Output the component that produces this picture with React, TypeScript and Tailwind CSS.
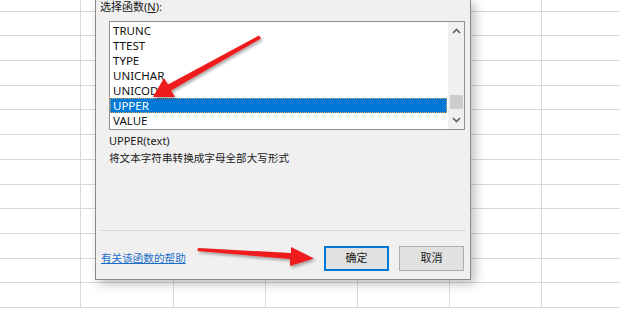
import React from 'react';

/**
 * Excel「插入函数」对话框的局部截图：
 * 背景是表格网格，前面是对话框，再加两支红色标注箭头。
 */

const FUNCS = ['TRUNC', 'TTEST', 'TYPE', 'UNICHAR', 'UNICODE', 'UPPER', 'VALUE'];
const SELECTED = 'UPPER';

const ui = { fontFamily: '"Noto Sans", "Noto Sans CJK SC", sans-serif' };

function SheetGrid() {
  // 第一行只露出下半截
  const rows = Array.from({ length: 13 });
  const cols = [81, 93, 92, 92, 92, 92, 92];
  return (
    <div className="-mt-[13px]">
      {rows.map((_, r) => (
        <div key={r} className="flex h-[24.7px]">
          {cols.map((w, c) => (
            <div
              key={c}
              className="shrink-0 border-r border-b border-[#d9d9d9]"
              style={{ width: w }}
            />
          ))}
        </div>
      ))}
    </div>
  );
}

function Chevron({ up }: { up?: boolean }) {
  return (
    <svg width="9" height="6" viewBox="0 0 9 6">
      <path
        d={up ? 'M1 5 L4.5 1.5 L8 5' : 'M1 1 L4.5 4.5 L8 1'}
        fill="none"
        stroke="#606060"
        strokeWidth="1.6"
      />
    </svg>
  );
}

function FunctionList() {
  return (
    <div className="flex h-[109px] w-[356px] border border-[#8e9296] bg-white">
      <div className="flex-1 pt-[1px]">
        {FUNCS.map((f) => (
          <div
            key={f}
            className={
              f === SELECTED
                ? 'mr-[1px] flex h-[15px] items-center border border-dotted border-[#d9a36a] bg-[#0078d7] pl-[2px] text-white'
                : 'flex h-[15px] items-center pl-[3px] text-[#111]'
            }
          >
            {f}
          </div>
        ))}
      </div>
      <div className="flex w-[16px] flex-col items-center bg-[#f0f0f0]">
        <div className="flex h-[18px] items-center">
          <Chevron up />
        </div>
        <div className="flex-1" />
        <div className="mb-[2px] h-[14px] w-[13px] bg-[#cdcdcd]" />
        <div className="flex h-[18px] items-center">
          <Chevron />
        </div>
      </div>
    </div>
  );
}

function Dialog() {
  return (
    <div
      className="absolute left-[95px] top-[-1px] flex h-[281px] w-[376px] flex-col border border-[#8a8a8a] bg-[#f0f0f0] shadow-[4px_4px_10px_rgba(0,0,0,0.25)]"
      style={ui}
    >
      <div className="pl-[4px] text-[11px] leading-[13px] text-[#1a1a1a]">
        选择函数(<span className="underline">N</span>):
      </div>
      <div className="ml-[13px] mt-[8px] text-[11.5px] leading-[15px]">
        <FunctionList />
      </div>
      <div className="ml-[13px] mt-[4px] text-[11px] leading-[14px] text-[#1a1a1a]">UPPER(text)</div>
      <div className="ml-[13px] mt-[3px] text-[10.6px] leading-[14px] text-[#1a1a1a]">
        将文本字符串转换成字母全部大写形式
      </div>
      <div className="flex-1" />
      <div className="mx-[4px] border-t border-[#dadada]" />
      <div className="flex items-center pb-[8px] pl-[5px] pr-[6px] pt-[15px]">
        <span className="text-[10.6px] text-[#1c6fc9] underline">有关该函数的帮助</span>
        <div className="flex-1" />
        <button className="h-[25px] w-[65px] border-2 border-[#0078d7] bg-[#e1e1e1] text-[11px] text-[#1a1a1a]">
          确定
        </button>
        <button className="ml-[10px] h-[25px] w-[65px] border border-[#adadad] bg-[#e1e1e1] text-[11px] text-[#1a1a1a]">
          取消
        </button>
      </div>
    </div>
  );
}

function Arrows() {
  return (
    <svg
      className="pointer-events-none absolute inset-0"
      width="620"
      height="309"
      viewBox="0 0 620 309"
    >
      <defs>
        <filter id="sh" x="-20%" y="-20%" width="140%" height="140%">
          <feDropShadow dx="1.5" dy="2" stdDeviation="1.5" floodColor="#000" floodOpacity="0.35" />
        </filter>
      </defs>
      <g fill="#ee1c1c" filter="url(#sh)">
        {/* 指向 UPPER 的箭头 */}
        <path d="M259 35.5 L261 38.5 L171 90.5 L175 97 L153 97 L164 78 L168 84.5 Z" />
        {/* 指向 确定 的箭头 */}
        <path d="M198 248 L291 253 L291 247 L314 258.5 L290 266 L290 259 L197.5 251 Z" />
      </g>
    </svg>
  );
}

export default function App() {
  return (
    <div className="relative h-[309px] w-[620px] overflow-hidden bg-white">
      <SheetGrid />
      <Dialog />
      <Arrows />
    </div>
  );
}
